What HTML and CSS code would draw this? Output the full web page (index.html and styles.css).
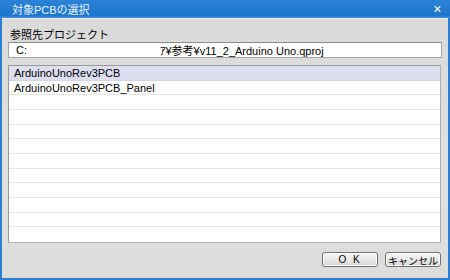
FILE: index.html
```html
<!DOCTYPE html>
<html>
    <head>
        <meta charset="utf-8">
        <link rel="stylesheet" href="styles.css">
    </head>
    <body>
        <div id="window">
            <div id="titlebar">
                <span id="title">対象PCBの選択</span>
                <span id="close">✕</span>
            </div>
            <div id="content">
                <p id="label">参照先プロジェクト</p>
                <div id="path">
                    <span>C:</span>
                    <span id="hidden"></span>
                    <span>ｱ¥参考¥v11_2_Arduino Uno.qproj</span>
                </div>
                <div id="list">
                    <div class="row selected">ArduinoUnoRev3PCB</div>
                    <div class="row">ArduinoUnoRev3PCB_Panel</div>
                    <div class="row"></div>
                    <div class="row"></div>
                    <div class="row"></div>
                    <div class="row"></div>
                    <div class="row"></div>
                    <div class="row"></div>
                    <div class="row"></div>
                    <div class="row"></div>
                    <div class="row"></div>
                    <div class="row last"></div>
                </div>
                <div id="buttons">
                    <button class="bt" id="ok">O K</button>
                    <button class="bt">キャンセル</button>
                </div>
            </div>
        </div>
    </body>
</html>
```

FILE: styles.css
```css
body{
    margin: 0;
    font-family: "Liberation Sans", "Noto Sans CJK JP", sans-serif;
    font-size: 11px;
    color: #000;
}
#window{
    width: 450px;
    height: 280px;
    box-sizing: border-box;
    display: flex;
    flex-direction: column;
    border: solid 2px #2a7fd3;
    border-top: none;
}
#titlebar{
    height: 18px;
    margin: 0 -2px;
    padding: 0 8px 0 12px;
    display: flex;
    align-items: center;
    justify-content: space-between;
    background: linear-gradient(#2c82d6, #1c76cc 85%, #4a95dc);
    color: white;
}
#title{
    font-size: 11px;
    color: #eef5fc;
}
#close{
    font-family: "DejaVu Sans", sans-serif;
    font-size: 11px;
    font-weight: bold;
}
#content{
    flex: 1;
    display: flex;
    flex-direction: column;
    padding: 10px 6px 11px 6px;
    background: linear-gradient(#dadada, #e0e0e0 60%, #dcdcdc);
    border-top: solid 1px #ececec;
}
#label{
    margin: 0 0 0 2px;
    height: 13px;
    line-height: 13px;
}
#path{
    height: 16px;
    box-sizing: border-box;
    display: flex;
    align-items: center;
    padding-left: 7px;
    background: white;
    border: solid 1px #a4a4a4;
    border-top-color: #8c8c8c;
}
#hidden{
    width: 133px;
}
#list{
    margin-top: 7px;
    height: 178px;
    box-sizing: border-box;
    background: white;
    border: solid 1px #9a9a9a;
    border-right-color: #b0b0b0;
    border-bottom-color: #b8b8b8;
    margin-right: 1px;
}
.row{
    height: 14.67px;
    box-sizing: border-box;
    line-height: 14px;
    padding-left: 5px;
    border-bottom: solid 1px #e6e6e6;
}
.selected{
    background: #dcdef0;
    border-bottom-color: #d4d6e8;
}
.last{
    border-bottom: none;
}
#buttons{
    margin-top: 9px;
    display: flex;
    justify-content: flex-end;
    gap: 7px;
    padding-right: 1px;
}
.bt{
    width: 56px;
    height: 15px;
    padding: 0;
    font-family: "Liberation Sans", "Noto Sans CJK JP", sans-serif;
    font-size: 10px;
    color: #000;
    background: linear-gradient(#f6f6f6, #e8e8e8 50%, #d6d6d6);
    border: solid 1px #707070;
    border-radius: 3px;
    box-shadow: inset 0 0 0 1px #fcfcfc;
}
#ok{
    letter-spacing: 2px;
}
```
